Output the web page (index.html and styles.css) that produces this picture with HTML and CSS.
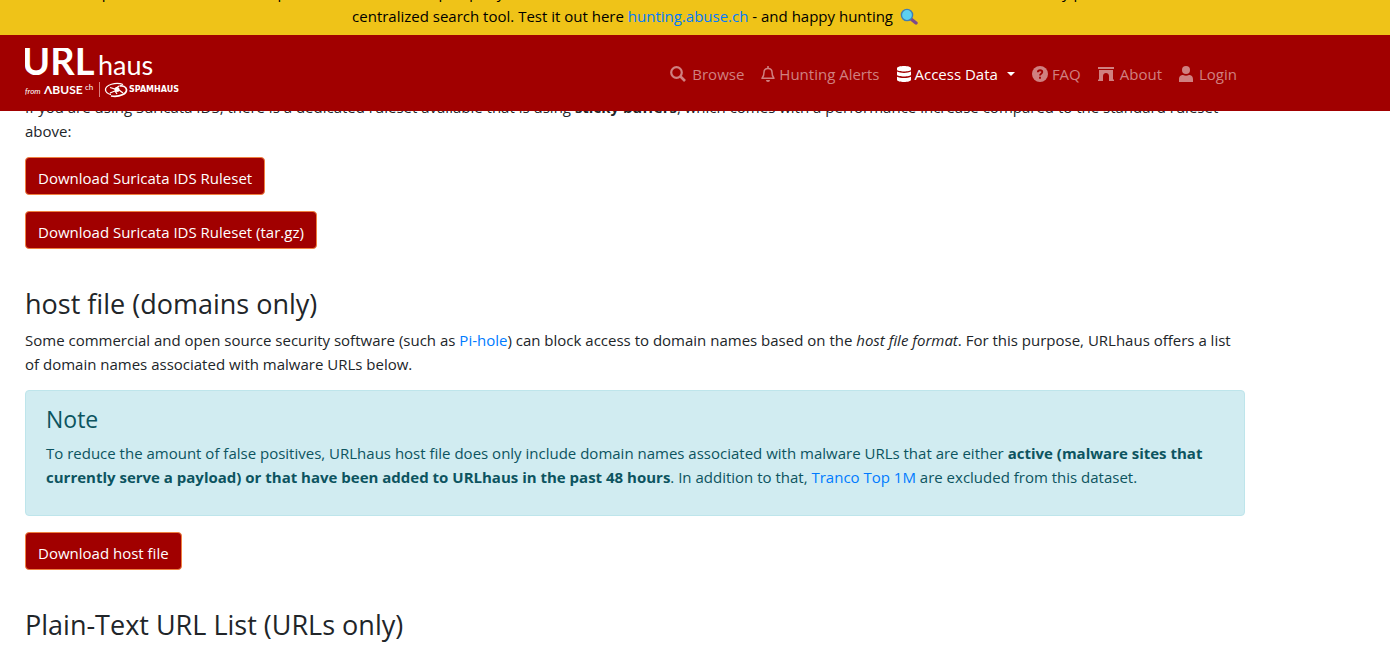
FILE: index.html
```html
<!DOCTYPE html>
<html lang="en">
<head>
<meta charset="utf-8">
<title>URLhaus | API</title>
<link rel="stylesheet" href="styles.css">
</head>
<body>
<header class="site-header">
  <div class="banner">
    <p class="banner-text">Explore across all abuse.ch platforms with one simple query - discover if an IPv4 address, domain, URL or file hash has been identified on any platform from a<br>centralized search tool. Test it out here <a href="#hunting">hunting.abuse.ch</a> - and happy hunting
      <svg class="glass" viewBox="0 0 18 18" aria-hidden="true"><path d="M11 11l5 4" stroke="#7d4a8c" stroke-width="3.4" stroke-linecap="round"/><circle cx="7" cy="7" r="5.6" fill="#5dd0f0" stroke="#3f7fb5" stroke-width="1.4"/></svg></p>
  </div>
  <nav class="navbar">
    <div class="navbar-inner">
      <a class="brand" href="#home" aria-label="URLhaus">
        <svg class="logo" viewBox="0 0 160 50">
          <g fill="#fff" font-family="Lato, sans-serif">
            <text x="-3" y="27" font-size="38" font-weight="700">URL</text>
            <text x="73" y="27" font-size="27">haus</text>
            <text x="0" y="46" font-size="8" font-style="italic">from</text>
            <text x="19" y="46" font-size="12" font-weight="700">ΛBUSE</text>
            <text x="60" y="42" font-size="8">ch</text>
            <text x="104" y="44" font-size="8" font-weight="700" font-family="DejaVu Sans, sans-serif">SPAMHAUS</text>
          </g>
          <path d="M74.500 34v15" stroke="#d98080"/>
          <g fill="none" stroke="#fff">
            <path d="M98 36.500C91 33.500 80 37 80.500 42c.5 3 3 4 5.500 4.500" stroke-width="1.300"/>
            <path d="M86 48c9 1.500 16-2.500 15.500-6.500c-.5-3-4-4-7-3.500" stroke-width="1.700"/>
            <path d="M85 39.500l5 1.500 4-3M85 45l5-2 2 3M94 42l4 3" stroke-width="1.300"/>
          </g>
          <circle cx="92" cy="41.500" r="2.500" fill="#fff"/>
        </svg>
      </a>
      <ul class="menu">
        <li><a class="spaced" href="#browse"><svg class="icon" viewBox="0 0 16 16"><circle cx="6.500" cy="6.500" r="5.300" fill="none" stroke="currentColor" stroke-width="2.200"/><path d="M10.500 10.500l4.500 4.500" stroke="currentColor" stroke-width="2.600"/></svg>Browse</a></li>
        <li><a href="#alerts"><svg class="icon" viewBox="0 0 14 16"><path d="M1 12.300h12c-1.800-1.800-2-3.300-2-6C11 3.800 9.300 2.500 7 2.500S3 3.800 3 6.300c0 2.700-.2 4.200-2 6z" fill="none" stroke="currentColor" stroke-width="1.500" stroke-linejoin="round"/><path d="M7 0v2.500" stroke="currentColor" stroke-width="1.600"/><path d="M5 14h4a2 2 0 0 1-4 0z" fill="currentColor"/></svg>Hunting Alerts</a></li>
        <li><a class="active" href="#access"><svg class="icon" viewBox="0 0 14 16"><g fill="currentColor"><path d="M0 2.300C0-.700 14-.700 14 2.300v1.400C14 6 0 6 0 3.700zM0 5.600c3 1.700 11 1.700 14 0v3.200c0 2.300-14 2.300-14 0zM0 10.700c3 1.700 11 1.700 14 0v3c0 3-14 3-14 0z"/></g></svg>Access Data<span class="caret"></span></a></li>
        <li><a href="#faq"><svg class="icon" viewBox="0 0 16 16"><circle cx="8" cy="8" r="8" fill="currentColor"/><path d="M5.800 6.200C6 3.500 10.300 3.700 10.300 6c0 1.700-2.300 1.600-2.300 3.400M8 10.800v2" fill="none" stroke="#a10000" stroke-width="1.800"/></svg>FAQ</a></li>
        <li><a class="spaced" href="#about"><svg class="icon" viewBox="0 0 16 16"><path d="M0 1h16v2H0zM1 4h14v9.500h1V15h-5v-5c0-4-6-4-6 0v5H0v-1.500h1z" fill="currentColor"/></svg>About</a></li>
        <li><a class="spaced" href="#login"><svg class="icon" viewBox="0 0 14 16"><circle cx="7" cy="4" r="4" fill="currentColor"/><path d="M0 16v-2.500C0 10 2 9 4 9c2 1 4 1 6 0 2 0 4 1 4 4.500V16z" fill="currentColor"/></svg>Login</a></li>
      </ul>
    </div>
  </nav>
</header>
<main class="content">
  <p>If you are using Suricata IDS, there is a dedicated ruleset available that is using <b>sticky buffers</b>, which comes with a performance increase compared to the standard ruleset<br>above:</p>
  <a class="btn" href="#suricata">Download Suricata IDS Ruleset</a>
  <a class="btn" href="#suricata-tar">Download Suricata IDS Ruleset (tar.gz)</a>
  <h3>host file (domains only)</h3>
  <p>Some commercial and open source security software (such as <a href="#pihole">Pi-hole</a>) can block access to domain names based on the <i>host file format</i>. For this purpose, URLhaus offers a list<br>of domain names associated with malware URLs below.</p>
  <section class="alert">
    <h4>Note</h4>
    <p>To reduce the amount of false positives, URLhaus host file does only include domain names associated with malware URLs that are either <b>active (malware sites that<br>currently serve a payload) or that have been added to URLhaus in the past 48 hours</b>. In addition to that, <a href="#tranco">Tranco Top 1M</a> are excluded from this dataset.</p>
  </section>
  <a class="btn" href="#hostfile">Download host file</a>
  <h3>Plain-Text URL List (URLs only)</h3>
</main>
</body>
</html>
```
FILE: styles.css
```css
* { box-sizing: border-box; }
body {
  margin: 0;
  background: #fff;
  color: #212529;
  font: 15px/24px "Open Sans", "Noto Sans", sans-serif;
}
a { color: #007bff; text-decoration: none; }
p { margin: 0 0 16px; }
.site-header { position: sticky; top: 0; z-index: 1; }
.banner {
  display: flex;
  align-items: flex-end;
  max-height: 35px;
  padding: 0 25px 7px;
  background: #efc318;
  color: #000;
  overflow: hidden;
}
.banner-text {
  flex: 1;
  max-width: 1220px;
  margin: 0;
  text-align: center;
  white-space: nowrap;
}
.glass { width: 18px; height: 18px; margin-left: 3px; vertical-align: -4px; }
.navbar { background: #a10000; }
.navbar-inner {
  display: flex;
  align-items: center;
  justify-content: space-between;
  max-width: 1270px;
  padding: 13px 33px 13px 25px;
}
.logo { display: block; width: 160px; height: 50px; }
.menu {
  display: flex;
  gap: 17px;
  margin: 0;
  padding: 2px 0 0;
  list-style: none;
}
.menu a {
  display: flex;
  align-items: center;
  gap: 4px;
  color: #d08080;
}
.menu .spaced { gap: 6px; }
.menu .active { color: #fff; }
.icon { height: 16px; }
.caret {
  margin-left: 5px;
  border: 4px solid transparent;
  border-top-color: currentColor;
  border-bottom: 0;
}
.content {
  display: flex;
  flex-direction: column;
  align-items: flex-start;
  max-width: 1270px;
  margin-top: -16px;
  padding: 0 25px;
  white-space: nowrap;
}
.content p { margin-bottom: 14px; }
.btn {
  padding: 8px 12px 4px;
  margin-bottom: 16px;
  border: 1px solid #f08040;
  border-radius: 4px;
  background: #a10000;
  color: #fff;
}
h3, h4 { margin: 0 0 8px; font-weight: 400; }
h3 { margin: 22px 0 7px; font-size: 27px; line-height: 34px; }
h4 { font-size: 23px; line-height: 28px; }
.alert {
  align-self: stretch;
  margin-bottom: 16px;
  padding: 14px 20px 12px;
  border: 1px solid #bee5eb;
  border-radius: 4px;
  background: #d1ecf1;
  color: #0c5460;
}
```
